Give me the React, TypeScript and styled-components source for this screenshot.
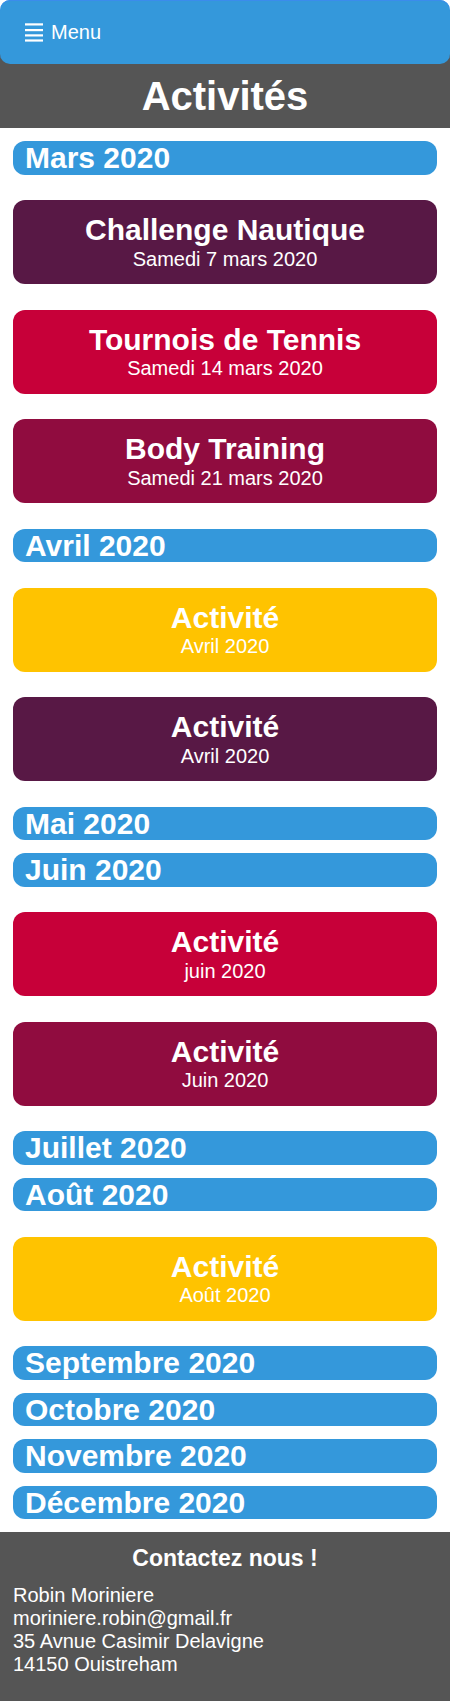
import React from "react";
import styled, { createGlobalStyle } from "styled-components";

const GlobalStyle = createGlobalStyle`
  html, body {
    margin: 0;
    padding: 0;
    background: #ffffff;
    font-family: "Liberation Sans", Arial, sans-serif;
  }
  * { box-sizing: border-box; }
`;

const Page = styled.div`
  min-height: 100vh;
  display: flex;
  flex-direction: column;
`;

const Header = styled.header`
  background: linear-gradient(to bottom, #ffffff 0 32px, #555555 32px);
`;

const Nav = styled.nav`
  height: 64px;
  display: flex;
  align-items: center;
  gap: 8px;
  padding: 0 25px;
  background: #3498db;
  border-radius: 10px;
  box-shadow: inset 0 1px 0 #3b8cec;
  color: #ffffff;
  font-size: 20px;
`;

const MenuIcon = styled.svg`
  width: 18px;
  height: 19px;
  flex: none;
`;

const Title = styled.h1`
  margin: 0;
  padding: 10px 0;
  height: 64px;
  background: #555555;
  color: #ffffff;
  text-align: center;
  font-size: 40px;
  line-height: 44px;
  font-weight: bold;
`;

const Main = styled.main`
  display: flow-root;
`;

const MonthBar = styled.h2`
  margin: 13px 13px;
  padding: 0 12px;
  background: #3498db;
  border-radius: 12px;
  color: #ffffff;
  font-size: 30px;
  line-height: 33.5px;
  font-weight: bold;
`;

const Card = styled.div<{ $bg: string }>`
  margin: 25.5px 13px;
  padding: 13.25px 10px;
  background: ${(p) => p.$bg};
  border-radius: 12px;
  color: #ffffff;
  text-align: center;
`;

const CardTitle = styled.div`
  font-size: 30px;
  line-height: 34.5px;
  font-weight: bold;
`;

const CardDate = styled.div`
  font-size: 20px;
  line-height: 23px;
`;

const Footer = styled.footer`
  flex: 1;
  background: #555555;
  color: #ffffff;
  padding: 13px 13px 25px;
`;

const FooterTitle = styled.div`
  text-align: center;
  font-size: 23px;
  line-height: 26.5px;
  font-weight: bold;
  margin-bottom: 12px;
`;

const FooterLine = styled.div`
  font-size: 20px;
  line-height: 23px;
`;

const C = {
  yellow: "#FFC300",
  red: "#C70039",
  crimson: "#900C3F",
  purple: "#581845",
};

type Item =
  | { kind: "month"; label: string }
  | { kind: "card"; title: string; date: string; bg: string };

const items: Item[] = [
  { kind: "month", label: "Mars 2020" },
  { kind: "card", title: "Challenge Nautique", date: "Samedi 7 mars 2020", bg: C.purple },
  { kind: "card", title: "Tournois de Tennis", date: "Samedi 14 mars 2020", bg: C.red },
  { kind: "card", title: "Body Training", date: "Samedi 21 mars 2020", bg: C.crimson },
  { kind: "month", label: "Avril 2020" },
  { kind: "card", title: "Activité", date: "Avril 2020", bg: C.yellow },
  { kind: "card", title: "Activité", date: "Avril 2020", bg: C.purple },
  { kind: "month", label: "Mai 2020" },
  { kind: "month", label: "Juin 2020" },
  { kind: "card", title: "Activité", date: "juin 2020", bg: C.red },
  { kind: "card", title: "Activité", date: "Juin 2020", bg: C.crimson },
  { kind: "month", label: "Juillet 2020" },
  { kind: "month", label: "Août 2020" },
  { kind: "card", title: "Activité", date: "Août 2020", bg: C.yellow },
  { kind: "month", label: "Septembre 2020" },
  { kind: "month", label: "Octobre 2020" },
  { kind: "month", label: "Novembre 2020" },
  { kind: "month", label: "Décembre 2020" },
];

export default function App() {
  return (
    <Page>
      <GlobalStyle />
      <Header>
        <Nav>
          <MenuIcon viewBox="0 0 18 19" aria-hidden="true">
            <rect x="0" y="0.3" width="18" height="2.2" fill="#fff" />
            <rect x="0" y="6" width="18" height="2.2" fill="#fff" />
            <rect x="0" y="11.3" width="18" height="2.2" fill="#fff" />
            <rect x="0" y="16.4" width="18" height="2.2" fill="#fff" />
          </MenuIcon>
          <span>Menu</span>
        </Nav>
        <Title>Activités</Title>
      </Header>
      <Main>
        {items.map((it, i) =>
          it.kind === "month" ? (
            <MonthBar key={i}>{it.label}</MonthBar>
          ) : (
            <Card key={i} $bg={it.bg}>
              <CardTitle>{it.title}</CardTitle>
              <CardDate>{it.date}</CardDate>
            </Card>
          )
        )}
      </Main>
      <Footer>
        <FooterTitle>Contactez nous !</FooterTitle>
        <FooterLine>Robin Moriniere</FooterLine>
        <FooterLine>moriniere.robin@gmail.fr</FooterLine>
        <FooterLine>35 Avnue Casimir Delavigne</FooterLine>
        <FooterLine>14150 Ouistreham</FooterLine>
      </Footer>
    </Page>
  );
}
